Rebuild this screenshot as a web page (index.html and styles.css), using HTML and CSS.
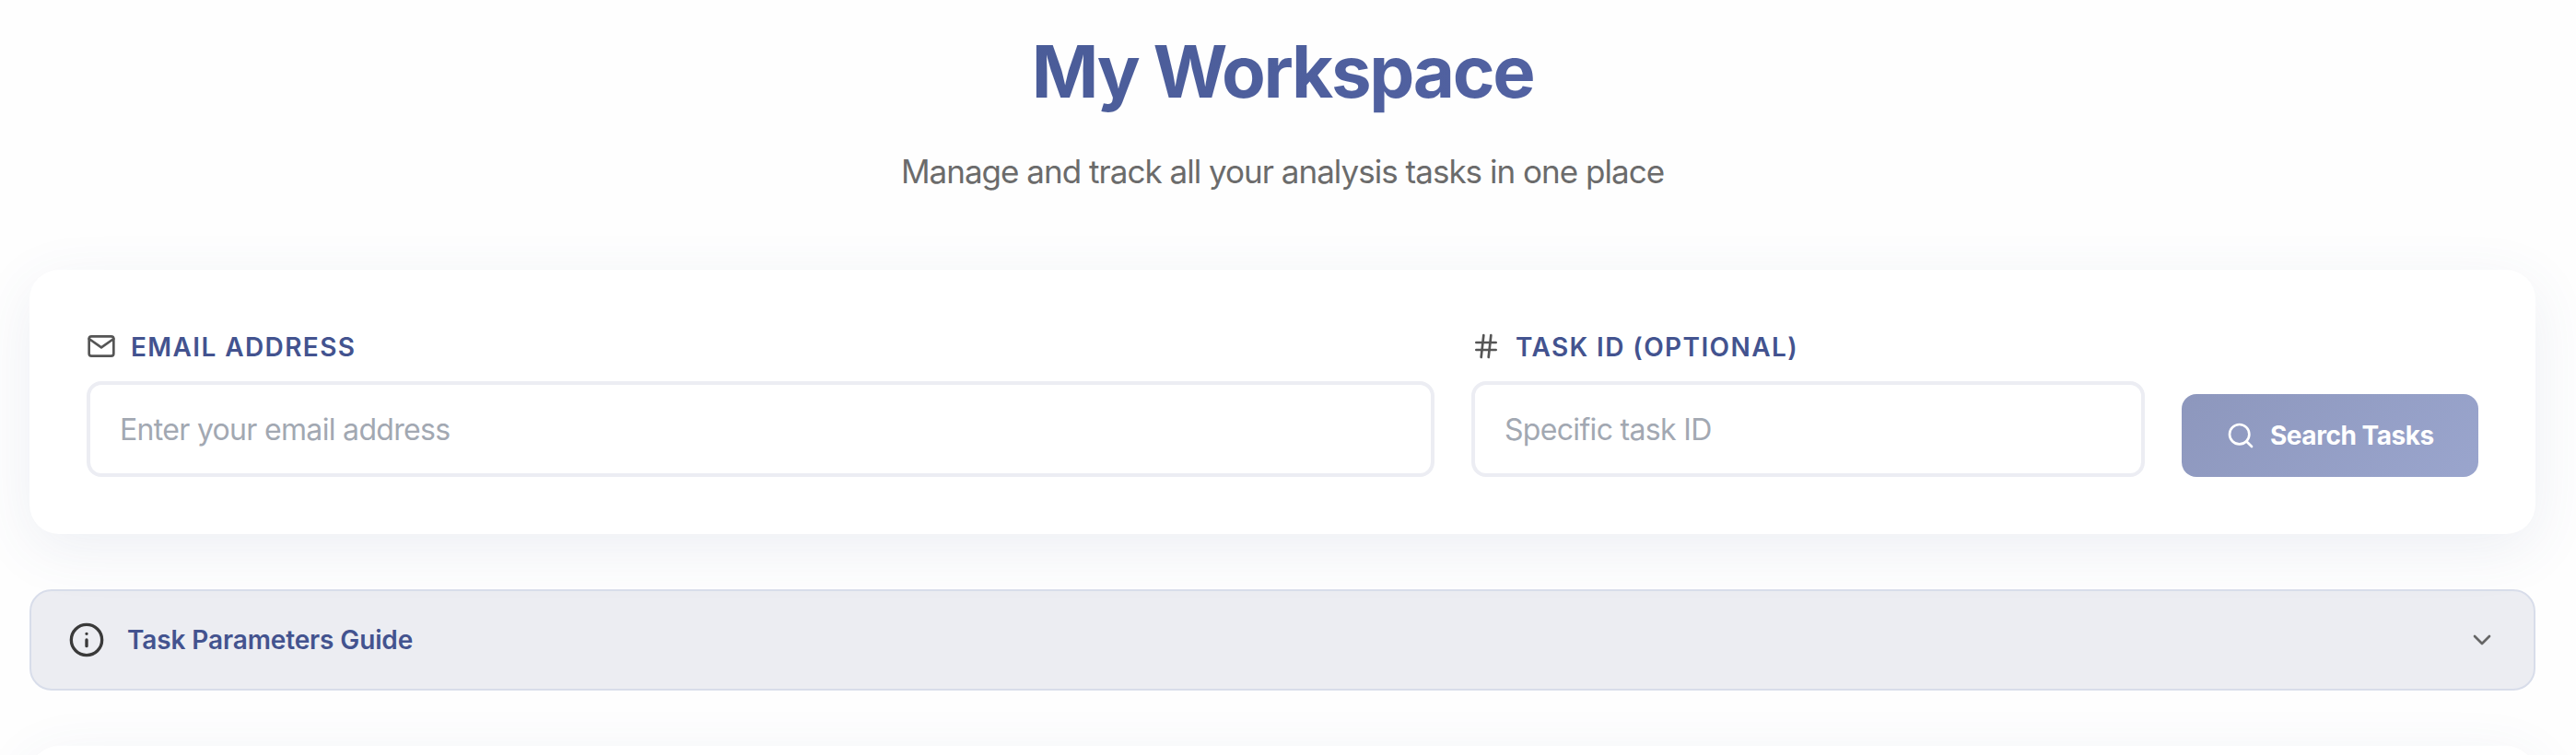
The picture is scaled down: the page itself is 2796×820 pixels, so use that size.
FILE: index.html
```html
<!DOCTYPE html>
<html lang="en">
<head>
<meta charset="utf-8">
<title>My Workspace</title>
<link rel="stylesheet" href="styles.css">
</head>
<body>
<main class="workspace">
  <header class="header">
    <h1 class="title"><span>My Workspace</span></h1>
    <p class="subtitle">Manage and track all your analysis tasks in one place</p>
  </header>
  <form class="card search">
    <div class="field">
      <label class="label" for="email">
        <svg class="icon" viewBox="0 0 24 24"><path d="M4 4h16c1.1 0 2 .9 2 2v12c0 1.1-.9 2-2 2H4c-1.1 0-2-.9-2-2V6c0-1.1.9-2 2-2z"/><polyline points="22,6 12,13 2,6"/></svg>
        <span class="label-text">EMAIL ADDRESS</span>
      </label>
      <input class="input" id="email" type="text" placeholder="Enter your email address">
    </div>
    <div class="field">
      <label class="label" for="task">
        <svg class="icon" viewBox="0 0 24 24"><path d="M4 9h16M4 15h16M10 3 8 21M16 3l-2 18"/></svg>
        <span class="label-text">TASK ID (OPTIONAL)</span>
      </label>
      <input class="input" id="task" type="text" placeholder="Specific task ID">
    </div>
    <button class="button" type="button">
      <svg class="icon" viewBox="0 0 24 24"><circle cx="11" cy="11" r="8"/><path d="m21 21-4.35-4.35"/></svg>
      <span>Search Tasks</span>
    </button>
  </form>
  <section class="guide">
    <svg class="icon icon-info" viewBox="0 0 24 24"><circle cx="12" cy="12" r="10"/><path d="M12 16v-4M12 8h.01"/></svg>
    <span class="guide-title">Task Parameters Guide</span>
    <svg class="icon icon-chevron" viewBox="0 0 24 24"><polyline points="6 9 12 15 18 9"/></svg>
  </section>
  <section class="card results"></section>
</main>
</body>
</html>
```
FILE: styles.css
```css
* { box-sizing: border-box; }

body {
  margin: 0;
  background: #fefefe;
  font-family: Inter, "Liberation Sans", sans-serif;
}

.workspace {
  display: flex;
  flex-direction: column;
  height: 820px;
  overflow: hidden;
  padding: 30px 44px 0 32px;
}

.header {
  flex: none;
  height: 263px;
  text-align: center;
}

.title {
  margin: 0;
  font-size: 78px;
  line-height: 96px;
  font-weight: 700;
  letter-spacing: -2.4px;
}

.title span {
  background: linear-gradient(135deg, #4a5c98, #5262a2);
  background-clip: text;
  color: transparent;
}

.subtitle {
  margin: 32px 0 0;
  font-size: 35px;
  line-height: 56px;
  letter-spacing: -0.98px;
  color: #6b6b6b;
}

.icon {
  width: 32px;
  height: 32px;
  flex: none;
  fill: none;
  stroke: #555;
  stroke-width: 2;
  stroke-linecap: round;
  stroke-linejoin: round;
}

.card {
  flex: none;
  border-radius: 32px;
  background: #fff;
  box-shadow: 0 16px 64px rgba(67, 88, 143, 0.09);
}

.search {
  display: grid;
  grid-template-columns: 1463px 731px 322px;
  gap: 40px;
  align-items: end;
  height: 287px;
  padding: 62px;
}

.label {
  display: flex;
  align-items: center;
  gap: 16px;
  height: 42px;
  margin-bottom: 17px;
  font-size: 28px;
  font-weight: 600;
  letter-spacing: 1.4px;
  color: #43538f;
}

.label-text { padding-top: 2px; }

.input {
  display: block;
  width: 100%;
  height: 104px;
  padding: 0 32px;
  border: 4px solid #ecedf3;
  border-radius: 16px;
  background: #fff;
  font: 400 32px Inter, "Liberation Sans", sans-serif;
  letter-spacing: -0.68px;
}

.input::placeholder { color: #a2a8b2; }

.button {
  display: flex;
  align-items: center;
  gap: 16px;
  height: 90px;
  padding: 0 48px;
  border: 0;
  border-radius: 16px;
  background: linear-gradient(135deg, #8d97bd, #9aa5cd);
  color: #fff;
  font: 700 28px Inter, "Liberation Sans", sans-serif;
  letter-spacing: -0.46px;
  white-space: nowrap;
}

.button .icon { stroke: #fff; }

.guide {
  display: flex;
  flex: none;
  align-items: center;
  gap: 24px;
  height: 110px;
  margin-top: 60px;
  padding: 0 40px;
  border: 2px solid #d8ddea;
  border-radius: 24px;
  background: rgba(74, 90, 140, 0.1);
}

.guide-title {
  flex: 1;
  font-size: 28px;
  font-weight: 600;
  letter-spacing: -0.12px;
  color: #43538f;
}

.icon-info {
  width: 40px;
  height: 40px;
  stroke: #3a3a3a;
}

.icon-chevron { stroke: #666; }

.results {
  height: 200px;
  margin-top: 60px;
}
```
